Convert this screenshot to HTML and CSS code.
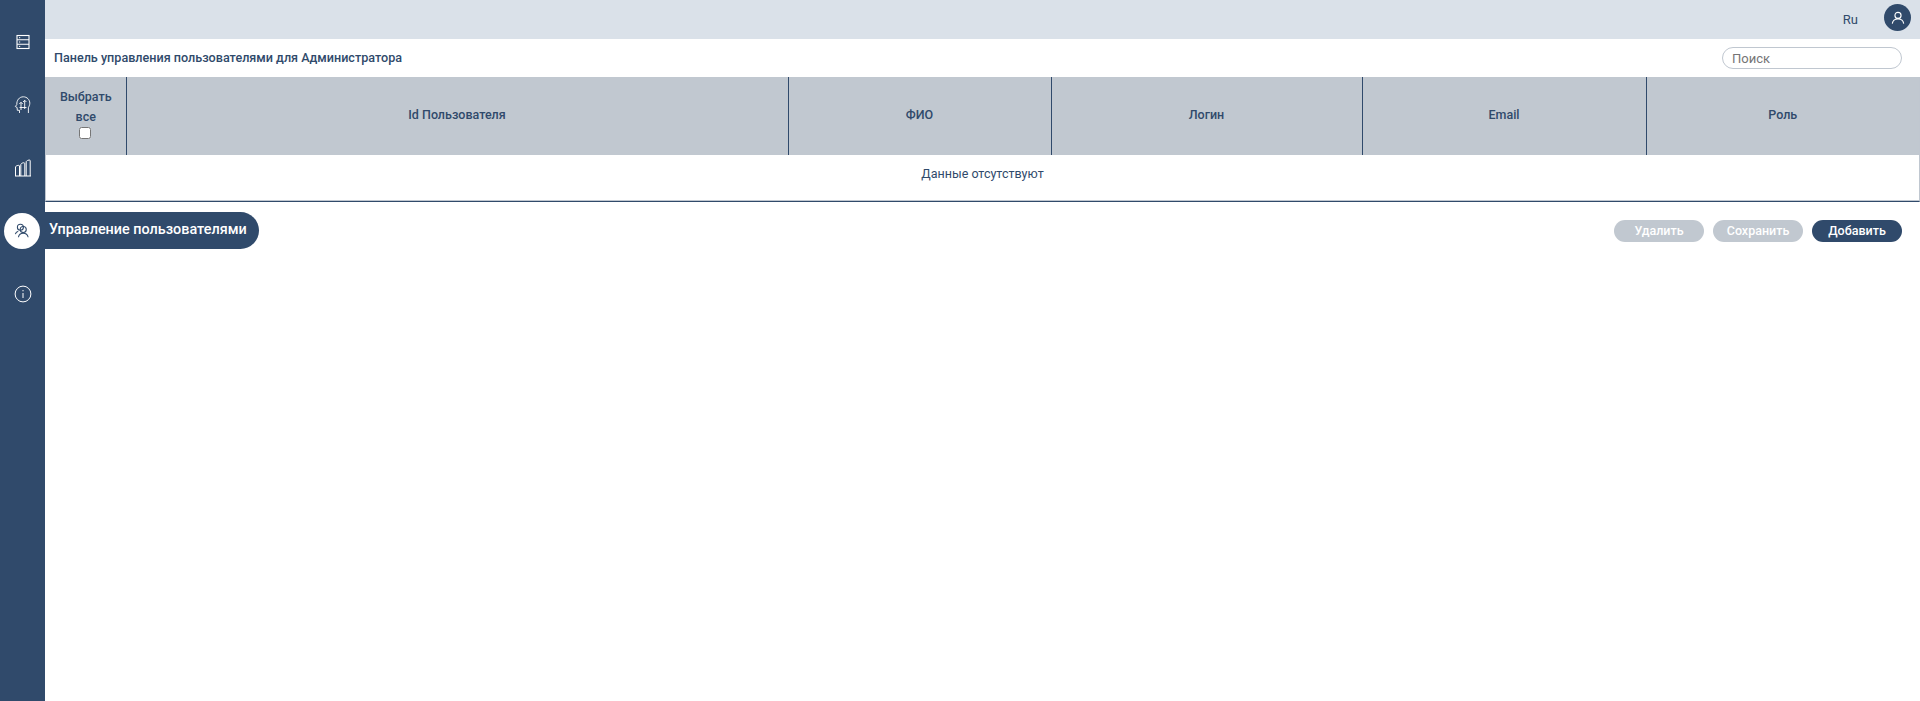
FILE: index.html
```html
<!DOCTYPE html>
<html lang="ru">
<head>
<meta charset="utf-8">
<title>Управление пользователями</title>
<link rel="stylesheet" href="styles.css">
</head>
<body>
<div class="app">
  <nav class="sidebar">
    <div class="nav-item">
      <svg class="icon" width="18" height="18" viewBox="0 0 18 18" fill="none" stroke="#fff" stroke-width="1.1"><rect x="3" y="2.5" width="12" height="13"/><path d="M3 6.800h12M3 11.200h12"/><path d="M5 4.700h1.200M5 9h1.200M5 13.400h1.200" stroke-width="1"/></svg>
    </div>
    <div class="nav-item">
      <svg class="icon" width="18" height="18" viewBox="0 0 18 18" fill="none" stroke="#fff" stroke-width="0.9"><path d="M5.500 17v-2.700H3.300l-.2-2.800L1.300 10.500l1.500-1.900C2.600 4.200 5.300.8 9.300.8c3.800 0 6.500 3 6.500 6.400 0 2.100-1 3.400-1.400 4.500V17"/><path d="M7 14V6.300M5.300 8 7 6.300 8.700 8M10.700 13V4.300M9 6l1.700-1.700L12.400 6M5.500 11.500h7"/></svg>
    </div>
    <div class="nav-item">
      <svg class="icon" width="18" height="18" viewBox="0 0 18 18" fill="none" stroke="#fff" stroke-width="1"><path d="M1 17h16M1.500 17V8c0-1.300 4-2.400 4-1v10M6.800 17V5.500c0-1.300 4-2.600 4-1V17M12.200 17V2.800c0-1.200 4-2.600 4-1.200v15.400"/></svg>
    </div>
    <div class="nav-item nav-item-active">
      <span class="nav-pill">Управление пользователями</span>
      <span class="nav-circle">
        <svg width="16" height="16" viewBox="0 0 18 18" fill="none" stroke="#304a6b" stroke-width="1.200"><circle cx="7.200" cy="4.800" r="3.400"/><circle cx="10.400" cy="7.400" r="3.400"/><path d="M1.500 12.600c.4-1.800 1.700-3 3.300-3.400M5 16c.4-2.700 2.600-4.500 5.400-4.500s5 1.800 5.500 4.500"/></svg>
      </span>
    </div>
    <div class="nav-item">
      <svg class="icon" width="18" height="18" viewBox="0 0 18 18" fill="none" stroke="#fff" stroke-width="1"><circle cx="9" cy="9" r="7.900"/><path d="M9 8v5M9 5v1.300"/></svg>
    </div>
  </nav>
  <main class="main">
    <header class="topbar">
      <span class="lang">Ru</span>
      <span class="avatar">
        <svg width="14" height="14" viewBox="0 0 16 16" fill="none" stroke="#fff" stroke-width="1.300"><circle cx="8" cy="5" r="3.500"/><path d="M1.500 14.500c.4-3.200 3-5.300 6.500-5.300s6.100 2.100 6.500 5.300"/></svg>
      </span>
    </header>
    <section class="panel-head">
      <h1 class="panel-title">Панель управления пользователями для Администратора</h1>
      <input class="search" type="text" placeholder="Поиск">
    </section>
    <div class="table-wrap">
      <table class="users">
        <colgroup>
          <col class="c-select"><col class="c-id"><col class="c-name"><col class="c-login"><col class="c-email"><col class="c-role">
        </colgroup>
        <thead>
          <tr>
            <th>Выбрать<br>все<br><input class="check" type="checkbox"></th>
            <th>Id Пользователя</th>
            <th>ФИО</th>
            <th>Логин</th>
            <th>Email</th>
            <th>Роль</th>
          </tr>
        </thead>
        <tbody>
          <tr><td class="empty" colspan="6">Данные отсутствуют</td></tr>
        </tbody>
      </table>
    </div>
    <div class="actions">
      <button class="btn btn-off" type="button">Удалить</button>
      <button class="btn btn-off" type="button">Сохранить</button>
      <button class="btn btn-on" type="button">Добавить</button>
    </div>
  </main>
</div>
</body>
</html>
```
FILE: styles.css
```css
* { box-sizing: border-box; }
html, body { margin: 0; height: 100%; }
body {
  font-family: Roboto, "Liberation Sans", sans-serif;
  color: #304a6b;
  background: #fff;
  overflow: hidden;
}
.app { display: flex; height: 701px; }
.sidebar {
  width: 45px;
  flex: none;
  background: #304a6b;
  display: flex;
  flex-direction: column;
  padding-top: 10px;
}
.nav-item {
  height: 63px;
  display: flex;
  align-items: center;
  justify-content: center;
  position: relative;
}
.icon { display: block; }
.nav-circle {
  position: relative;
  width: 36px;
  height: 36px;
  margin-left: -1px;
  border-radius: 50%;
  background: #fff;
  display: flex;
  align-items: center;
  justify-content: center;
}
.nav-pill {
  position: absolute;
  left: 45px;
  top: 13px;
  width: 214px;
  height: 37px;
  padding-left: 4px;
  background: #304a6b;
  color: #fff;
  font-size: 14.4px;
  font-weight: 500;
  line-height: 35px;
  white-space: nowrap;
  border-radius: 0 19px 19px 0;
}
.main { flex: 1; min-width: 0; display: flex; flex-direction: column; }
.topbar {
  height: 39px;
  background: #dae1e9;
  display: flex;
  align-items: flex-start;
  justify-content: flex-end;
  padding: 4px 9px 0 0;
  flex: none;
}
.lang { font-size: 13px; line-height: 32px; margin-right: 26px; }
.avatar {
  width: 27px;
  height: 27px;
  border-radius: 50%;
  background: #304a6b;
  display: flex;
  align-items: center;
  justify-content: center;
}
.panel-head {
  height: 38px;
  flex: none;
  display: flex;
  align-items: center;
  justify-content: space-between;
  padding: 0 18px 0 9px;
}
.panel-title { margin: 0 0 2px; font-size: 12.6px; font-weight: 500; }
.search {
  width: 180px;
  height: 22px;
  border: 1px solid #c0c7d0;
  border-radius: 11px;
  padding: 0 9px;
  font: 400 13px Roboto, sans-serif;
  color: #304a6b;
  outline: none;
}
.search::placeholder { color: #757575; opacity: 1; }
.table-wrap {
  height: 125px;
  flex: none;
  border-right: 1px solid #c0c7d0;
  border-left: 1px solid #c0c7d0;
  border-bottom: 1px solid #304a6b;
  box-shadow: inset 0 -1px 0 #c0c7d0;
}
.users { width: 100%; border-collapse: collapse; table-layout: fixed; }
.c-select { width: 80px; }
.c-id { width: 662px; }
.c-name { width: 263px; }
.c-login { width: 311px; }
.c-email { width: 284px; }
.users th {
  height: 78px;
  padding: 0 0 2px;
  background: #c1c8d0;
  font-size: 12.5px;
  font-weight: 500;
  line-height: 20px;
  border-right: 1px solid #304a6b;
  vertical-align: middle;
}
.users th:last-child { border-right: 0; }
.check { display: block; width: 12px; height: 12px; margin: 0 auto 4px; transform: translateX(-1px); }
.empty { height: 46px; padding: 0 0 9px; text-align: center; font-size: 12.5px; }
.actions {
  display: flex;
  justify-content: flex-end;
  gap: 9px;
  padding: 18px 18px 0 0;
}
.btn {
  width: 90px;
  height: 22px;
  padding: 0 0 2px;
  border: 0;
  border-radius: 11px;
  color: #fff;
  font: 500 12.5px Roboto, sans-serif;
}
.btn-off { background: #c1c8d0; }
.btn-on { background: #304a6b; }
```
